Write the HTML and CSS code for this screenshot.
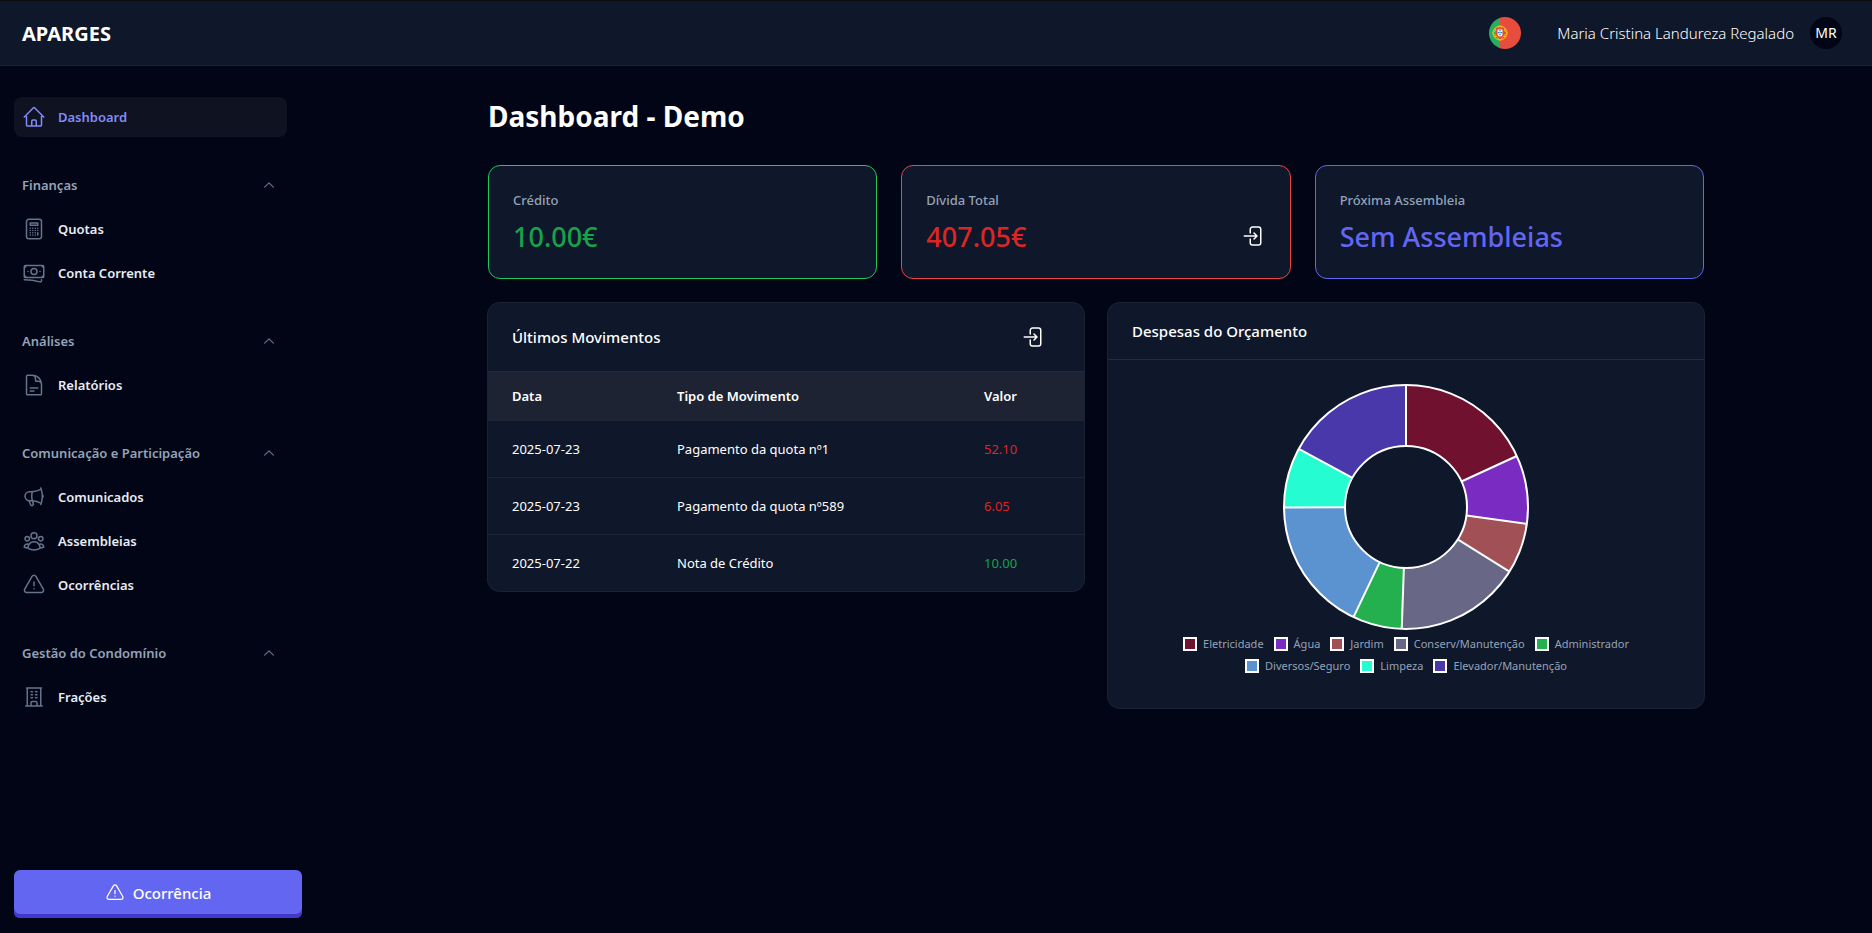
FILE: index.html
```
<!DOCTYPE html>
<html lang="pt">
<head>
<meta charset="utf-8">
<title>Dashboard - Demo</title>
<link rel="stylesheet" href="styles.css">
</head>
<body>
<svg class="sprite" aria-hidden="true">
  <symbol id="i-warning" viewBox="0 0 24 24"><path d="M12 9v3.75m-9.303 3.376c-.866 1.5.217 3.374 1.948 3.374h14.71c1.73 0 2.813-1.874 1.948-3.374L13.949 3.378c-.866-1.5-3.032-1.5-3.898 0L2.697 16.126ZM12 15.75h.007v.008H12v-.008Z"/></symbol>
  <symbol id="i-chevron" viewBox="0 0 24 24"><path d="m4.5 15.75 7.5-7.5 7.5 7.5"/></symbol>
  <symbol id="i-enter" viewBox="0 0 24 24"><path d="M8.25 9V5.25A2.25 2.25 0 0 1 10.5 3h6a2.25 2.25 0 0 1 2.25 2.25v13.5A2.25 2.25 0 0 1 16.5 21h-6a2.25 2.25 0 0 1-2.25-2.25V15M12 9l3 3m0 0-3 3m3-3H2.25"/></symbol>
</svg>

<header class="topbar">
  <span class="brand">APARGES</span>
  <button class="flag" type="button" aria-label="Português">
    <svg viewBox="0 0 32 32" width="32" height="32">
      <clipPath id="round"><circle cx="16" cy="16" r="16"/></clipPath>
      <g clip-path="url(#round)">
        <path fill="#27ae60" d="M0 0h11v32H0z"/><path fill="#e74c3c" d="M11 0h21v32H11z"/>
        <g fill="none" stroke="#f1c40f" stroke-width="1"><circle cx="11" cy="16" r="7"/><ellipse cx="11" cy="16" rx="7" ry="3"/><ellipse cx="11" cy="16" rx="3" ry="7"/><path d="M5 12.500h12M5 19.500h12"/></g>
        <path fill="#e74c3c" d="M7 11h8v6a4 4 0 0 1-8 0z"/>
        <path fill="#ecf0f1" d="M8.500 12.500h5v4.500a2.500 2.500 0 0 1-5 0z"/>
        <path fill="#2980b9" d="M10.400 13h1.200v1.200h-1.200zM10.400 15h1.200v1.200h-1.200zM10.400 17h1.200v1.200h-1.200zM8.800 15H10v1.200H8.800zM12 15h1.200v1.200H12z"/>
      </g>
    </svg>
  </button>
  <button class="user" type="button"><span>Maria Cristina Landureza Regalado</span><span class="avatar">MR</span></button>
</header>

<div class="shell">
  <aside class="sidebar">
    <nav class="nav">
      <div class="nav-group">
        <a class="nav-item is-active" href="#"><svg class="icon" viewBox="0 0 24 24"><path d="m2.250 12 8.954-8.955c.44-.439 1.152-.439 1.591 0L21.750 12M4.500 9.750v10.125c0 .621.504 1.125 1.125 1.125H9.750v-4.875c0-.621.504-1.125 1.125-1.125h2.250c.621 0 1.125.504 1.125 1.125V21h4.125c.621 0 1.125-.504 1.125-1.125V9.750M8.250 21h8.250"/></svg>Dashboard</a>
      </div>
      <div class="nav-group">
        <button class="nav-head" type="button">Finanças<svg class="chevron"><use href="#i-chevron"/></svg></button>
        <a class="nav-item" href="#"><svg class="icon" viewBox="0 0 24 24"><rect x="4.500" y="2.250" width="15" height="19.500" rx="2.250"/><path d="M8.250 6h7.500v2.250h-7.500zM15.750 15.750V18M8.250 11.250h.008v.008H8.250zM8.250 13.500h.008v.008H8.250zM8.250 15.750h.008v.008H8.250zM8.250 18h.008v.008H8.250zM10.750 11.250h.008v.008h-.008zM10.750 13.500h.008v.008h-.008zM10.750 15.750h.008v.008h-.008zM10.750 18h.008v.008h-.008zM13.250 11.250h.008v.008h-.008zM13.250 13.500h.008v.008h-.008zM13.250 15.750h.008v.008h-.008zM13.250 18h.008v.008h-.008zM15.750 11.250h.008v.008h-.008zM15.750 13.500h.008v.008h-.008z"/></svg>Quotas</a>
        <a class="nav-item" href="#"><svg class="icon" viewBox="0 0 24 24"><path d="M2.250 18.750a60.070 60.070 0 0 1 15.797 2.101c.727.198 1.453-.342 1.453-1.096V18.750M3.750 4.500v.750A.750.750 0 0 1 3 6h-.750m0 0v-.375c0-.621.504-1.125 1.125-1.125H20.250M2.250 6v9m18-10.500v.750c0 .414.336.750.750.750h.750m-1.500-1.500h.375c.621 0 1.125.504 1.125 1.125v9.750c0 .621-.504 1.125-1.125 1.125h-.375m1.500-1.500H21a.750.750 0 0 0-.750.750v.750m0 0H3.750m0 0h-.375a1.125 1.125 0 0 1-1.125-1.125V15m1.500 1.500v-.750A.750.750 0 0 0 3 15h-.750M15 10.500a3 3 0 1 1-6 0 3 3 0 0 1 6 0Zm3 0h.008v.008H18V10.500Zm-12 0h.008v.008H6V10.500Z"/></svg>Conta Corrente</a>
      </div>
      <div class="nav-group">
        <button class="nav-head" type="button">Análises<svg class="chevron"><use href="#i-chevron"/></svg></button>
        <a class="nav-item" href="#"><svg class="icon" viewBox="0 0 24 24"><path d="M19.500 14.250v-2.625a3.375 3.375 0 0 0-3.375-3.375h-1.500A1.125 1.125 0 0 1 13.500 7.125v-1.500a3.375 3.375 0 0 0-3.375-3.375H8.250m0 12.750h7.500m-7.500 3H12M10.500 2.250H5.625c-.621 0-1.125.504-1.125 1.125v17.250c0 .621.504 1.125 1.125 1.125h12.750c.621 0 1.125-.504 1.125-1.125V11.250a9 9 0 0 0-9-9Z"/></svg>Relatórios</a>
      </div>
      <div class="nav-group">
        <button class="nav-head" type="button">Comunicação e Participação<svg class="chevron"><use href="#i-chevron"/></svg></button>
        <a class="nav-item" href="#"><svg class="icon" viewBox="0 0 24 24"><path d="M10.340 15.840c-.688-.060-1.386-.090-2.090-.090H7.500a4.500 4.500 0 1 1 0-9h.750c.704 0 1.402-.030 2.090-.090m0 9.180c.253.962.584 1.892.985 2.783.247.550.060 1.210-.463 1.511l-.657.380c-.551.318-1.260.117-1.527-.461a20.845 20.845 0 0 1-1.440-4.282m3.102.069a18.030 18.030 0 0 1-.590-4.590c0-1.586.205-3.124.590-4.590m0 9.180a23.848 23.848 0 0 1 8.835 2.535M10.340 6.660a23.847 23.847 0 0 0 8.835-2.535m0 0A23.740 23.740 0 0 0 18.795 3m.380 1.125a23.910 23.910 0 0 1 1.014 5.395m-1.014 8.855c-.118.380-.245.754-.380 1.125m.380-1.125a23.910 23.910 0 0 0 1.014-5.395m0-3.460c.495.413.811 1.035.811 1.730 0 .695-.316 1.317-.811 1.730m0-3.460a24.347 24.347 0 0 1 0 3.460"/></svg>Comunicados</a>
        <a class="nav-item" href="#"><svg class="icon" viewBox="0 0 24 24"><path d="M18 18.720a9.094 9.094 0 0 0 3.741-.479 3 3 0 0 0-4.682-2.720m.940 3.198.001.031c0 .225-.012.447-.037.666A11.944 11.944 0 0 1 12 21c-2.170 0-4.207-.576-5.963-1.584A6.062 6.062 0 0 1 6 18.719m12 0a5.971 5.971 0 0 0-.941-3.197m0 0A5.995 5.995 0 0 0 12 12.750a5.995 5.995 0 0 0-5.058 2.772m0 0a3 3 0 0 0-4.681 2.720 8.986 8.986 0 0 0 3.740.477m.940-3.197a5.971 5.971 0 0 0-.940 3.197M15 6.750a3 3 0 1 1-6 0 3 3 0 0 1 6 0Zm6 3a2.250 2.250 0 1 1-4.500 0 2.250 2.250 0 0 1 4.500 0Zm-13.500 0a2.250 2.250 0 1 1-4.500 0 2.250 2.250 0 0 1 4.500 0Z"/></svg>Assembleias</a>
        <a class="nav-item" href="#"><svg class="icon"><use href="#i-warning"/></svg>Ocorrências</a>
      </div>
      <div class="nav-group">
        <button class="nav-head" type="button">Gestão do Condomínio<svg class="chevron"><use href="#i-chevron"/></svg></button>
        <a class="nav-item" href="#"><svg class="icon" viewBox="0 0 24 24"><path d="M3.750 21h16.500M4.500 3h15M5.250 3v18m13.500-18v18M9 6.750h1.500m-1.500 3h1.500m-1.500 3h1.500m3-6H15m-1.500 3H15m-1.500 3H15M9 21v-3.375c0-.621.504-1.125 1.125-1.125h3.750c.621 0 1.125.504 1.125 1.125V21"/></svg>Frações</a>
      </div>
    </nav>
    <button class="report" type="button"><svg class="icon-sm"><use href="#i-warning"/></svg>Ocorrência</button>
  </aside>

  <main class="content">
    <h1 class="title">Dashboard - Demo</h1>
    <section class="stats">
      <article class="stat stat-credit"><div><h2 class="stat-label">Crédito</h2><p class="stat-value">10.00€</p></div></article>
      <article class="stat stat-debt"><div><h2 class="stat-label">Dívida Total</h2><p class="stat-value">407.05€</p></div><a class="enter" href="#" aria-label="Ver dívida"><svg class="icon"><use href="#i-enter"/></svg></a></article>
      <article class="stat stat-meeting"><div><h2 class="stat-label">Próxima Assembleia</h2><p class="stat-value">Sem Assembleias</p></div></article>
    </section>
    <section class="panels">
      <article class="panel">
        <header class="panel-head panel-head-tall"><h2 class="panel-title">Últimos Movimentos</h2><a class="enter enter-inset" href="#" aria-label="Ver movimentos"><svg class="icon"><use href="#i-enter"/></svg></a></header>
        <table class="moves">
          <colgroup><col class="col-date"><col class="col-type"><col></colgroup>
          <thead><tr><th>Data</th><th>Tipo de Movimento</th><th>Valor</th></tr></thead>
          <tbody>
            <tr><td>2025-07-23</td><td>Pagamento da quota nº1</td><td class="neg">52.10</td></tr>
            <tr><td>2025-07-23</td><td>Pagamento da quota nº589</td><td class="neg">6.05</td></tr>
            <tr><td>2025-07-22</td><td>Nota de Crédito</td><td class="pos">10.00</td></tr>
          </tbody>
        </table>
      </article>
      <article class="panel">
        <header class="panel-head"><h2 class="panel-title">Despesas do Orçamento</h2></header>
        <div class="chart">
          <svg class="donut" viewBox="0 0 246 246" width="246" height="246" role="img" aria-label="Despesas do Orçamento">
            <g class="slices" transform="rotate(-90 123 123)">
              <circle cx="123" cy="123" r="91.500" pathLength="360" stroke="#701130" stroke-dasharray="65.300 360"/>
              <circle cx="123" cy="123" r="91.500" pathLength="360" stroke="#7a2cc2" stroke-dasharray="32.700 360" stroke-dashoffset="-65.300"/>
              <circle cx="123" cy="123" r="91.500" pathLength="360" stroke="#a15055" stroke-dasharray="24 360" stroke-dashoffset="-98"/>
              <circle cx="123" cy="123" r="91.500" pathLength="360" stroke="#686786" stroke-dasharray="60 360" stroke-dashoffset="-122"/>
              <circle cx="123" cy="123" r="91.500" pathLength="360" stroke="#24b04f" stroke-dasharray="23.500 360" stroke-dashoffset="-182"/>
              <circle cx="123" cy="123" r="91.500" pathLength="360" stroke="#5b92d0" stroke-dasharray="64.300 360" stroke-dashoffset="-205.500"/>
              <circle cx="123" cy="123" r="91.500" pathLength="360" stroke="#26fcd1" stroke-dasharray="28.700 360" stroke-dashoffset="-269.800"/>
              <circle cx="123" cy="123" r="91.500" pathLength="360" stroke="#4838aa" stroke-dasharray="61.500 360" stroke-dashoffset="-298.500"/>
            </g>
            <g class="rims">
              <circle cx="123" cy="123" r="122"/><circle cx="123" cy="123" r="61"/>
              <path d="M123 62V1"/>
              <path d="M123 62V1" transform="rotate(65.300 123 123)"/>
              <path d="M123 62V1" transform="rotate(98 123 123)"/>
              <path d="M123 62V1" transform="rotate(122 123 123)"/>
              <path d="M123 62V1" transform="rotate(182 123 123)"/>
              <path d="M123 62V1" transform="rotate(205.500 123 123)"/>
              <path d="M123 62V1" transform="rotate(269.800 123 123)"/>
              <path d="M123 62V1" transform="rotate(298.500 123 123)"/>
            </g>
          </svg>
          <ul class="legend">
            <li><i class="swatch c1"></i>Eletricidade</li><li><i class="swatch c2"></i>Água</li><li><i class="swatch c3"></i>Jardim</li><li><i class="swatch c4"></i>Conserv/Manutenção</li><li><i class="swatch c5"></i>Administrador</li><li><i class="swatch c6"></i>Diversos/Seguro</li><li><i class="swatch c7"></i>Limpeza</li><li><i class="swatch c8"></i>Elevador/Manutenção</li>
          </ul>
        </div>
      </article>
    </section>
  </main>
</div>
</body>
</html>
```
FILE: styles.css
```
* { box-sizing: border-box; }
body {
  margin: 0;
  min-height: 100vh;
  display: flex;
  flex-direction: column;
  background: #020515;
  color: #fff;
  font: 400 13px/20px "Noto Sans", "Open Sans", sans-serif;
}
h1, h2, p, ul { margin: 0; padding: 0; }
button { font: inherit; color: inherit; background: none; border: 0; padding: 0; cursor: pointer; }
a { color: inherit; text-decoration: none; }
.sprite { display: none; }

.icon, .icon-sm, .chevron {
  flex: none;
  fill: none;
  stroke: currentColor;
  stroke-width: 1.5;
  stroke-linecap: round;
  stroke-linejoin: round;
}
.icon { width: 24px; height: 24px; }
.icon-sm { width: 20px; height: 20px; }
.chevron { width: 14px; height: 14px; stroke-width: 2; color: #64748b; }

.topbar {
  display: flex;
  align-items: center;
  height: 66px;
  padding: 0 30px 0 22px;
  background: #0f172a;
  border-top: 1px solid #0d0d0d;
  border-bottom: 1px solid #1b2333;
}
.brand { flex: 1; padding-top: 2px; font-size: 20px; line-height: 28px; font-weight: 700; }
.flag { width: 32px; height: 32px; margin-right: 36px; }
.flag svg { display: block; }
.user { display: flex; align-items: center; gap: 16px; font-size: 15px; font-weight: 300; }
.avatar {
  display: grid;
  place-items: center;
  width: 32px;
  height: 32px;
  border-radius: 50%;
  background: #020515;
  font-size: 14px;
  font-weight: 400;
}

.shell { flex: 1; display: flex; }
.sidebar {
  flex: none;
  width: 320px;
  display: flex;
  flex-direction: column;
  justify-content: space-between;
  padding: 31px 18px 15px 14px;
}
.nav { display: flex; flex-direction: column; gap: 28px; margin-right: 15px; }
.nav-group { display: flex; flex-direction: column; gap: 4px; }
.nav-item, .nav-head {
  display: flex;
  align-items: center;
  height: 40px;
  padding: 0 8px;
  border-radius: 8px;
  font-weight: 600;
}
.nav-item { gap: 12px; color: #e8edf5; }
.nav-item .icon { color: #64748b; }
.nav-head { justify-content: space-between; padding-right: 11px; color: #94a3b8; }
.nav-item.is-active { background: #0f1221; }
.nav-item.is-active, .nav-item.is-active .icon { color: #818cf8; }
.report {
  display: flex;
  align-items: center;
  justify-content: center;
  gap: 8px;
  height: 48px;
  border-radius: 6px;
  background: #6366f1;
  box-shadow: inset 0 -4px 0 #4338ca;
  padding-bottom: 2px;
  font-size: 15px;
  font-weight: 500;
}

.content { flex: 1; max-width: 1280px; margin: 0 auto; padding: 32px; }
.title { font-size: 28px; line-height: 36px; font-weight: 700; margin-bottom: 31px; }
.stats { display: grid; grid-template-columns: repeat(3, 1fr); gap: 24px; margin-bottom: 24px; }
.stat {
  display: flex;
  justify-content: space-between;
  padding: 24px 24px 20px;
  min-height: 114px;
  border: 1px solid;
  border-radius: 12px;
  background: #0f172a;
}
.stat-label { font-size: 13px; line-height: 20px; font-weight: 500; color: #94a3b8; }
.stat-value { margin-top: 8px; font-size: 27px; line-height: 38px; font-weight: 500; }
.stat .enter { align-self: flex-end; margin-bottom: 10px; }
.stat-credit { border-color: #22c55e; }
.stat-credit .stat-value { color: #16a34a; }
.stat-debt { border-color: #ef4444; }
.stat-debt .stat-value { color: #dc2626; }
.stat-meeting { border-color: #6366f1; }
.stat-meeting .stat-value { color: #6366f1; }
.enter { display: flex; }
.enter-inset { padding: 0 14px; }

.panels { display: grid; grid-template-columns: repeat(2, 1fr); gap: 24px; align-items: start; }
.panel { border-radius: 12px; background: #0f172a; box-shadow: 0 0 0 1px #1a2234; overflow: hidden; }
.panel-head {
  display: flex;
  align-items: center;
  justify-content: space-between;
  padding: 16px 24px;
  border-bottom: 1px solid #232c3d;
}
.panel-head-tall { padding: 22px 24px; }
.panel-title { font-size: 15px; line-height: 24px; font-weight: 500; }

.moves { width: 100%; border-collapse: collapse; table-layout: fixed; }
.col-date { width: 165px; }
.col-type { width: 307px; }
.moves th { height: 48px; padding: 0 0 0 24px; text-align: left; font-weight: 600; background: #1d2333; }
.moves td { height: 57px; padding: 0 0 0 24px; border-top: 1px solid #1c2536; }
.moves .neg { color: #dc2626; }
.moves .pos { color: #16a34a; }

.chart { display: flex; flex-direction: column; align-items: center; padding: 24px 24px 32px; }
.donut { display: block; }
.slices circle { fill: none; stroke-width: 61; }
.rims { fill: none; stroke: #fff; stroke-width: 2; }
.legend {
  display: flex;
  flex-wrap: wrap;
  justify-content: center;
  max-width: 480px;
  margin-top: 4px;
  gap: 2px 10px;
  list-style: none;
  font-size: 11px;
  color: #94a3b8;
}
.legend li { display: flex; align-items: center; gap: 6px; }
.swatch { width: 14px; height: 14px; border: 2px solid #fff; }
.c1 { background: #701130; }
.c2 { background: #7a2cc2; }
.c3 { background: #a15055; }
.c4 { background: #686786; }
.c5 { background: #24b04f; }
.c6 { background: #5b92d0; }
.c7 { background: #26fcd1; }
.c8 { background: #4838aa; }
```
